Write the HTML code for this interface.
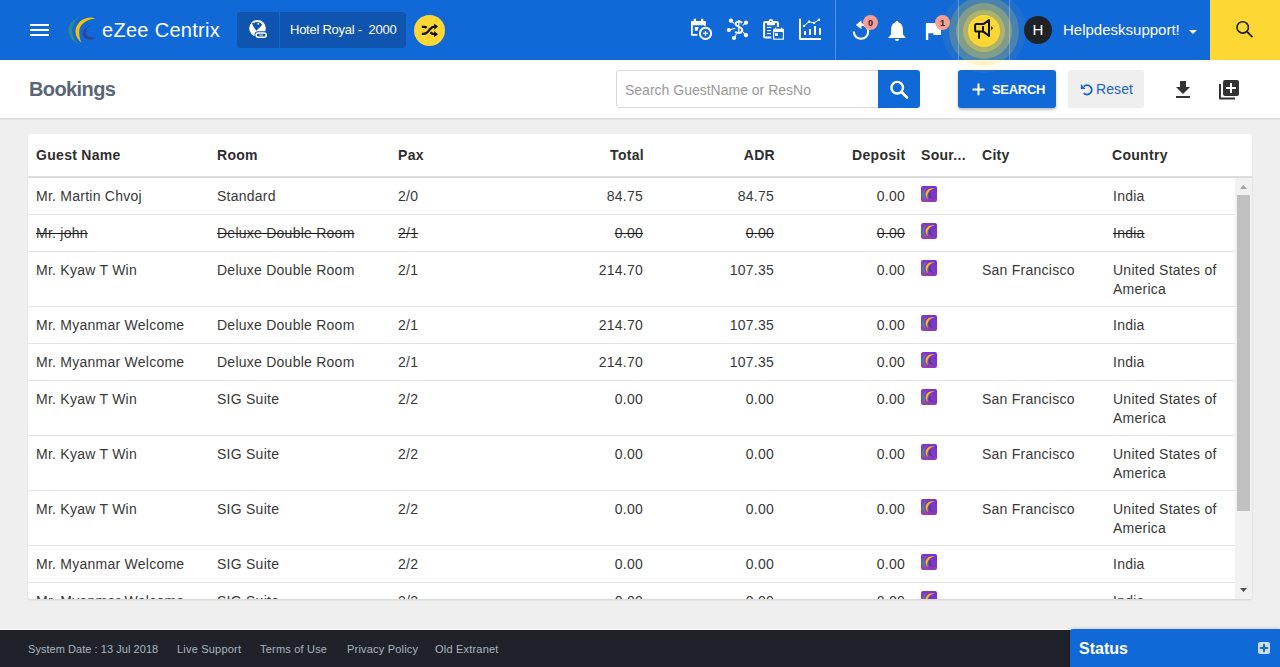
<!DOCTYPE html>
<html><head><meta charset="utf-8"><title>Bookings</title>
<style>
*{margin:0;padding:0;box-sizing:border-box}
html,body{width:1280px;height:667px;overflow:hidden}
body{position:relative;background:#efefef;font-family:"Liberation Sans",sans-serif;color:#333}
.a{position:absolute}
svg{position:absolute;overflow:visible}
#nav{z-index:2;left:0;top:0;width:1280px;height:60px;background:#1169d8}
.sep{top:0;width:1px;height:60px;background:rgba(255,255,255,.28)}
.badge{width:15px;height:15px;border-radius:50%;background:#f99d96;color:#2a1a1a;font-size:9px;font-weight:bold;line-height:16.5px;text-align:center}
#sub{left:0;top:60px;width:1280px;height:59px;background:#fff;border-bottom:1px solid #dcdcdc;box-shadow:0 1px 1px rgba(0,0,0,.04)}
#card{left:28px;top:134px;width:1224px;height:465px;background:#fff;border-radius:3px;box-shadow:0 1px 2px rgba(0,0,0,.12);overflow:hidden}
.th{position:absolute;top:0;height:42px;font-weight:bold;font-size:14px;color:#2e2e2e;line-height:18px;padding-top:12px;letter-spacing:0.3px}
.row{position:absolute;left:0;width:1207px;border-bottom:1px solid #e3e3e3}
.c{position:absolute;top:0;font-size:14px;line-height:19px;padding-top:9.4px;color:#383838;letter-spacing:0.25px}
.r{text-align:right}
.s{text-decoration:line-through;text-decoration-color:#1a1a1a}
#foot{left:0;top:629px;width:1280px;height:38px;background:#1f2329;border-top:1px solid #fafafa}
.fl{top:13px;font-size:11px;line-height:13px;color:#a9b5c1;letter-spacing:0.2px}
</style></head><body>

<div id="nav" class="a">
  <!-- hamburger -->
  <div class="a" style="left:30px;top:24px;width:19px;height:2px;background:#fff"></div>
  <div class="a" style="left:30px;top:29px;width:19px;height:2px;background:#fff"></div>
  <div class="a" style="left:30px;top:34px;width:19px;height:2px;background:#fff"></div>
  <!-- logo -->
  <svg width="1" height="1" style="left:0;top:0">
    <path fill="#2f8a8c" d="M80.2,16.3 C73,19.5 68.3,25 68.3,30.3 C68.3,36 72,41 78.6,43.8 C74.5,40 72.1,35.5 72.1,30.3 C72.1,25 75,20 80.2,16.3 Z"/>
    <path fill="#f6c300" d="M95.3,18.5 C88,15.5 78.5,20 76,28 C74.5,33 76.5,38.5 81.3,42.5 C79.5,38.5 78.8,34 79.3,30 C80.5,23.5 87,19.5 95.3,18.5 Z"/>
    <path fill="#2b479e" d="M90.4,24.7 C85,27.5 82.6,31 82.6,34 C82.8,37.8 86,39.5 89.5,39.5 C92,39.5 94.5,38.5 96.4,37.4 C92,38 87.5,37 86.3,34 C85.5,31 87,27.5 90.4,24.7 Z"/>
  </svg>
  <div class="a" style="left:102px;top:18px;font-size:20px;line-height:24px;color:#fff;letter-spacing:0.3px">eZee Centrix</div>
  <!-- hotel box -->
  <div class="a" style="left:237px;top:12px;width:42px;height:36px;background:#0f55b0;border-radius:3px 0 0 3px"></div>
  <div class="a" style="left:280px;top:12px;width:126px;height:36px;background:#0f55b0;border-radius:0 3px 3px 0"></div>
  <svg width="1" height="1" style="left:0;top:0">
    <circle cx="257.5" cy="28.3" r="8.3" fill="#fff"/>
    <path fill="#0f55b0" d="M252,23.4 C253.5,22.5 256,22 258,22 C259.6,22.2 261,23 262,24.4 C261.4,26 260,27.3 258.8,28.2 C258,29 257.4,30 256.6,30.7 C255,29 253,26 252,23.4 Z"/>
    <circle cx="258.3" cy="23.7" r="0.95" fill="#fff"/>
    <rect x="254.5" y="31.3" width="13.4" height="7.6" rx="3.8" fill="#0f55b0"/>
    <rect x="256.1" y="32.9" width="10.2" height="4.4" rx="2.2" fill="none" stroke="#fff" stroke-width="1.5"/>
    <rect x="259.4" y="34.5" width="3.6" height="1.2" fill="#fff" opacity=".75"/>
  </svg>
  <div class="a" style="left:290px;top:21.5px;font-size:13px;line-height:16px;color:#fff;white-space:pre;letter-spacing:-0.25px">Hotel Royal -  2000</div>
  <!-- shuffle -->
  <div class="a" style="left:414px;top:15px;width:31px;height:31px;border-radius:50%;background:#fdd835"></div>
  <svg width="1" height="1" style="left:0;top:0">
    <path d="M421.8,26.8 H424.3 C425.4,26.8 426,27.2 426.7,27.9 M421.8,33.8 H423.8 C426.8,33.8 427.9,31.8 429.7,29.5 C431.5,27.2 432.6,26.6 435,26.6 M430.4,32.3 C431.7,33.5 432.6,34.2 435,34.2" fill="none" stroke="#111" stroke-width="2.3"/>
    <path d="M434.2,23.5 L438,26.6 L434.2,29.7 Z M434.2,31.1 L438,34.2 L434.2,37.3 Z" fill="#111"/>
  </svg>

  <!-- icon group 1 -->
  <svg width="1" height="1" style="left:0;top:0" fill="#fff">
    <!-- calendar plus -->
    <rect x="693.7" y="18.8" width="2.3" height="3" />
    <rect x="701" y="18.8" width="2.3" height="3" />
    <path d="M692,21 h13 a1,1 0 0 1 1,1 v3.8 h-2 v-0.6 h-11.2 v8.8 h4.6 v1.8 h-5.4 a1,1 0 0 1 -1,-1 v-12.8 a1,1 0 0 1 1,-1 z"/>
    <path d="M694.8,27.1 h3.8 l-1,3.7 h-2.8 z"/>
    <circle cx="705.5" cy="33.4" r="5.6" fill="none" stroke="#fff" stroke-width="2"/>
    <path d="M705.5,30.9 v5 M703,33.4 h5" stroke="#fff" stroke-width="1.3"/>
    <!-- network dollar -->
    <g stroke="#fff" stroke-width="1.1" fill="none">
      <path d="M731,20.7 L734,23.4 M746,22.7 L742.6,25.4 M728.8,30 L735.2,28.3 M734,38 L736.4,34 M746,35.2 L743,32.2"/>
      <path d="M742.2,22.8 C740.8,21.2 735.8,20.8 735.5,23.9 C735.2,26.8 742.3,26.3 742.3,29.9 C742.3,33.4 736.8,33.6 735.2,31.7" stroke-width="1.9"/>
      <path d="M738.8,19.9 V34" stroke-width="1.3"/>
    </g>
    <circle cx="730.9" cy="20.7" r="2.1"/><circle cx="746" cy="22.7" r="2.1"/><circle cx="728.8" cy="30" r="2.1"/>
    <circle cx="734" cy="38" r="2.1"/><circle cx="746" cy="35.2" r="2.1"/>
    <!-- clipboard calendar -->
    <rect x="764.1" y="21.9" width="13.8" height="15.7" rx="1.3" fill="none" stroke="#fff" stroke-width="2"/>
    <rect x="767" y="21.2" width="8" height="4" rx="0.8"/>
    <circle cx="770.9" cy="21.2" r="2.2"/><circle cx="770.9" cy="21.6" r="0.8" fill="#1169d8"/>
    <rect x="767" y="26.9" width="6" height="1.1"/><rect x="767" y="30" width="4" height="1.1"/><rect x="767" y="33" width="4" height="1.1"/>
    <rect x="771.3" y="27" width="14" height="14" fill="#1169d8"/>
    <rect x="773" y="28.8" width="11" height="11" rx="0.8"/>
    <rect x="774.2" y="32" width="8.6" height="6.6" fill="#1169d8"/>
    <rect x="775" y="33.2" width="3" height="2.7"/>
    <rect x="775" y="27.7" width="1.2" height="2"/><rect x="781" y="27.7" width="1.2" height="2"/>
    <!-- chart -->
    <path d="M799,18.7 h2 v19.3 h20 v2 h-20.5 a1.5,1.5 0 0 1 -1.5,-1.5 z"/>
    <rect x="804" y="31" width="2" height="4"/><rect x="809" y="29" width="2" height="6"/><rect x="814" y="26" width="2" height="9"/><rect x="819" y="28" width="2" height="7"/>
    <path d="M804,25.9 L809,21.8 L814,22.9 L819,19.7" stroke="#fff" stroke-width="1" fill="none"/>
    <circle cx="804" cy="25.9" r="1.2"/><circle cx="809" cy="21.8" r="1.2"/><circle cx="814" cy="22.9" r="1.2"/><circle cx="819" cy="19.7" r="1.2"/>
  </svg>
  <div class="a sep" style="left:835px"></div>
  <!-- refresh -->
  <svg width="1" height="1" style="left:0;top:0">
    <path d="M861,24.4 A7.2,7.2 0 1 1 853.8,31.6" fill="none" stroke="#fff" stroke-width="2.1"/>
    <path d="M861.5,20.3 L855.8,24.9 L861.5,29.2 Z" fill="#fff"/>
    <!-- bell -->
    <path fill="#fff" d="M897,20.9 a1.4,1.4 0 0 1 1.4,1.4 C901.6,23.3 902.9,26 902.9,29.5 v4.8 l3,3.8 h-17.8 l3,-3.8 v-4.8 C891.1,26 892.4,23.3 895.6,22.3 a1.4,1.4 0 0 1 1.4,-1.4 z"/>
    <path fill="#fff" d="M894.8,38.9 h4.4 a2.2,2.1 0 0 1 -4.4,0 z"/>
    <!-- flag -->
    <rect x="925.9" y="23" width="2.4" height="17" fill="#fff"/>
    <path fill="#fff" d="M927.5,23 h13.5 v11.9 h-7.6 v-1.7 h-5.9 z"/>
  </svg>
  <div class="a badge" style="left:863px;top:15px">0</div>
  <div class="a badge" style="left:935px;top:15px">1</div>
  <!-- megaphone halo -->
  <div class="a" style="left:942px;top:-11px;width:84px;height:84px;border-radius:50%;background:rgba(253,216,53,.06)"></div>
  <div class="a" style="left:949px;top:-4px;width:70px;height:70px;border-radius:50%;background:rgba(253,216,53,.2)"></div>
  <div class="a" style="left:956px;top:3px;width:56px;height:56px;border-radius:50%;background:rgba(253,216,53,.3)"></div>
  <div class="a" style="left:963px;top:10px;width:42px;height:42px;border-radius:50%;background:rgba(253,216,53,.38)"></div>
  <div class="a sep" style="left:958px"></div>
  <div class="a sep" style="left:1009px"></div>
  <div class="a" style="left:968px;top:15px;width:32px;height:32px;border-radius:50%;background:#fdd835"></div>
  <svg width="1" height="1" style="left:0;top:0">
    <path d="M983.4,24.1 L989,20.1 V35.9 L983.4,31.6 H976.4 A1.3,1.3 0 0 1 975.1,30.3 V25.4 A1.3,1.3 0 0 1 976.4,24.1 Z" fill="none" stroke="#111" stroke-width="2" stroke-linejoin="round"/>
    <path d="M983,26.1 V32.4 M979,32 V38.8" stroke="#111" stroke-width="2"/>
    <path d="M991.2,26 L993,28.2 L991.2,30.5 Z" fill="#111"/>
  </svg>
  <!-- avatar -->
  <div class="a" style="left:1024px;top:16px;width:28px;height:28px;border-radius:50%;background:#1f2329;color:#fff;font-size:15px;line-height:28px;text-align:center">H</div>
  <div class="a" style="left:1063px;top:21px;font-size:15px;line-height:18px;color:#fff">Helpdesksupport!</div>
  <svg width="1" height="1" style="left:0;top:0"><path d="M1189,30 h8 l-4,4 z" fill="#fff"/></svg>
  <!-- search yellow -->
  <div class="a" style="left:1210px;top:0;width:70px;height:60px;background:#fdd835"></div>
  <svg width="1" height="1" style="left:0;top:0">
    <circle cx="1242.7" cy="27.4" r="5.7" fill="none" stroke="#222" stroke-width="1.6"/>
    <path d="M1246.8,31.5 L1252.5,37.2" stroke="#222" stroke-width="1.8"/>
  </svg>
</div>

<div id="sub" class="a">
  <div class="a" style="left:29px;top:18px;font-size:20px;line-height:23px;font-weight:bold;color:#5a6577;letter-spacing:-0.6px">Bookings</div>
  <div class="a" style="left:616px;top:10px;width:264px;height:38px;border:1px solid #d3dae3;border-radius:3px 0 0 3px;background:#fff"></div>
  <div class="a" style="left:625px;top:22px;font-size:14px;line-height:17px;color:#999">Search GuestName or ResNo</div>
  <div class="a" style="left:878px;top:10px;width:42px;height:38px;background:#1169d8;border-radius:0 3px 3px 0"></div>
  <svg width="1" height="1" style="left:0;top:-60px">
    <circle cx="897.2" cy="87.7" r="5.8" fill="none" stroke="#fff" stroke-width="2.4"/>
    <path d="M901.5,92 L907,97.5" stroke="#fff" stroke-width="2.6" stroke-linecap="round"/>
  </svg>
  <div class="a" style="left:958px;top:10px;width:98px;height:38px;background:#1169d8;border-radius:3px;box-shadow:0 2px 3px rgba(0,0,0,.25)"></div>
  <svg width="1" height="1" style="left:0;top:-60px">
    <path d="M978.5,83.5 v11.7 M972.5,89.4 h12" stroke="#fff" stroke-width="2"/>
  </svg>
  <div class="a" style="left:992px;top:22px;font-size:13px;line-height:16px;font-weight:bold;color:#fff;letter-spacing:-0.3px">SEARCH</div>
  <div class="a" style="left:1068px;top:10px;width:76px;height:38px;background:#efefef;border-radius:3px"></div>
  <svg width="1" height="1" style="left:0;top:-60px">
    <path d="M1083.7,86.6 A4.7,4.7 0 1 1 1083.7,93.2" fill="none" stroke="#1a62d0" stroke-width="1.8"/>
    <path d="M1080.9,83.9 V89 H1085.6 Z" fill="#1a62d0"/>
  </svg>
  <div class="a" style="left:1096px;top:21px;font-size:14px;line-height:17px;color:#1a62d0;letter-spacing:0.1px">Reset</div>
  <!-- download -->
  <svg width="1" height="1" style="left:0;top:-60px" fill="#333">
    <path d="M1180,81 h6 v6 h4 l-7,7 l-7,-7 h4 z"/>
    <rect x="1176" y="96" width="14" height="2"/>
    <!-- library add -->
    <rect x="1223" y="80" width="16" height="16" rx="2"/>
    <path d="M1231,83 v10 M1226,88 h10" stroke="#fff" stroke-width="2"/>
    <path d="M1219,84 h2 v13.6 h14 v2 h-15 a1,1 0 0 1 -1,-1 z"/>
  </svg>
</div>

<div id="card" class="a">
  <div class="th" style="left:8px">Guest Name</div>
  <div class="th" style="left:189px">Room</div>
  <div class="th" style="left:370px">Pax</div>
  <div class="th r" style="left:486px;width:130px">Total</div>
  <div class="th r" style="left:617px;width:130px">ADR</div>
  <div class="th r" style="left:747.5px;width:130px">Deposit</div>
  <div class="th" style="left:893px">Sour...</div>
  <div class="th" style="left:954px">City</div>
  <div class="th" style="left:1084px">Country</div>
  <div class="a" style="left:0;top:42px;width:1224px;height:2px;background:#dcdcdc"></div>
  <div id="rows" class="a" style="left:0;top:44px;width:1224px;height:421px;overflow:hidden">
<div class="row" style="top:0px;height:37px"><div class="c" style="left:8px">Mr. Martin Chvoj</div><div class="c" style="left:189px">Standard</div><div class="c" style="left:370px">2/0</div><div class="c r" style="left:485px;width:130px">84.75</div><div class="c r" style="left:616px;width:130px">84.75</div><div class="c r" style="left:747px;width:130px">0.00</div><svg width="16" height="16" viewBox="0 0 16 16" style="position:absolute;left:893px;top:8px"><defs><linearGradient id="g0" x1="1" y1="0" x2="0" y2="1"><stop offset="0" stop-color="#6d2fe0"/><stop offset="1" stop-color="#a5409f"/></linearGradient></defs><rect width="16" height="16" rx="2" fill="url(#g0)"/><path fill="#2d9a95" d="M6.2,1.4 C3,2.8 1.3,5.5 1.3,8 C1.3,11 3,13.4 6,14.7 C4.3,12.8 2.9,10.5 2.9,8 C2.9,5.5 4.2,3.2 6.2,1.4 Z"/><path fill="#f6c300" d="M13.8,2.5 C10,1.4 6.2,3.2 5,6.2 C4.1,8.5 4.7,11 6.9,13.2 C6.2,11 6.2,9 6.8,7.4 C8,4.5 10.5,3 13.8,2.5 Z"/><path fill="#2b479e" d="M10.8,5.5 C8.5,6.7 7.6,8.3 7.8,9.8 C8.2,11.9 10.8,12.9 13.6,12.2 C11.5,12 10.1,11.2 9.7,9.8 C9.3,8.5 9.7,6.9 10.8,5.5 Z"/></svg><div class="c" style="left:1085px;width:120px">India</div></div>
<div class="row" style="top:37px;height:37px"><div class="c s" style="left:8px">Mr. john</div><div class="c s" style="left:189px">Deluxe Double Room</div><div class="c s" style="left:370px">2/1</div><div class="c r s" style="left:485px;width:130px">0.00</div><div class="c r s" style="left:616px;width:130px">0.00</div><div class="c r s" style="left:747px;width:130px">0.00</div><svg width="16" height="16" viewBox="0 0 16 16" style="position:absolute;left:893px;top:8px"><defs><linearGradient id="g1" x1="1" y1="0" x2="0" y2="1"><stop offset="0" stop-color="#6d2fe0"/><stop offset="1" stop-color="#a5409f"/></linearGradient></defs><rect width="16" height="16" rx="2" fill="url(#g1)"/><path fill="#2d9a95" d="M6.2,1.4 C3,2.8 1.3,5.5 1.3,8 C1.3,11 3,13.4 6,14.7 C4.3,12.8 2.9,10.5 2.9,8 C2.9,5.5 4.2,3.2 6.2,1.4 Z"/><path fill="#f6c300" d="M13.8,2.5 C10,1.4 6.2,3.2 5,6.2 C4.1,8.5 4.7,11 6.9,13.2 C6.2,11 6.2,9 6.8,7.4 C8,4.5 10.5,3 13.8,2.5 Z"/><path fill="#2b479e" d="M10.8,5.5 C8.5,6.7 7.6,8.3 7.8,9.8 C8.2,11.9 10.8,12.9 13.6,12.2 C11.5,12 10.1,11.2 9.7,9.8 C9.3,8.5 9.7,6.9 10.8,5.5 Z"/></svg><div class="c s" style="left:1085px;width:120px">India</div></div>
<div class="row" style="top:74px;height:55px"><div class="c" style="left:8px">Mr. Kyaw T Win</div><div class="c" style="left:189px">Deluxe Double Room</div><div class="c" style="left:370px">2/1</div><div class="c r" style="left:485px;width:130px">214.70</div><div class="c r" style="left:616px;width:130px">107.35</div><div class="c r" style="left:747px;width:130px">0.00</div><svg width="16" height="16" viewBox="0 0 16 16" style="position:absolute;left:893px;top:8px"><defs><linearGradient id="g2" x1="1" y1="0" x2="0" y2="1"><stop offset="0" stop-color="#6d2fe0"/><stop offset="1" stop-color="#a5409f"/></linearGradient></defs><rect width="16" height="16" rx="2" fill="url(#g2)"/><path fill="#2d9a95" d="M6.2,1.4 C3,2.8 1.3,5.5 1.3,8 C1.3,11 3,13.4 6,14.7 C4.3,12.8 2.9,10.5 2.9,8 C2.9,5.5 4.2,3.2 6.2,1.4 Z"/><path fill="#f6c300" d="M13.8,2.5 C10,1.4 6.2,3.2 5,6.2 C4.1,8.5 4.7,11 6.9,13.2 C6.2,11 6.2,9 6.8,7.4 C8,4.5 10.5,3 13.8,2.5 Z"/><path fill="#2b479e" d="M10.8,5.5 C8.5,6.7 7.6,8.3 7.8,9.8 C8.2,11.9 10.8,12.9 13.6,12.2 C11.5,12 10.1,11.2 9.7,9.8 C9.3,8.5 9.7,6.9 10.8,5.5 Z"/></svg><div class="c" style="left:954px">San Francisco</div><div class="c" style="left:1085px;width:120px">United States of America</div></div>
<div class="row" style="top:129px;height:37px"><div class="c" style="left:8px">Mr. Myanmar Welcome</div><div class="c" style="left:189px">Deluxe Double Room</div><div class="c" style="left:370px">2/1</div><div class="c r" style="left:485px;width:130px">214.70</div><div class="c r" style="left:616px;width:130px">107.35</div><div class="c r" style="left:747px;width:130px">0.00</div><svg width="16" height="16" viewBox="0 0 16 16" style="position:absolute;left:893px;top:8px"><defs><linearGradient id="g3" x1="1" y1="0" x2="0" y2="1"><stop offset="0" stop-color="#6d2fe0"/><stop offset="1" stop-color="#a5409f"/></linearGradient></defs><rect width="16" height="16" rx="2" fill="url(#g3)"/><path fill="#2d9a95" d="M6.2,1.4 C3,2.8 1.3,5.5 1.3,8 C1.3,11 3,13.4 6,14.7 C4.3,12.8 2.9,10.5 2.9,8 C2.9,5.5 4.2,3.2 6.2,1.4 Z"/><path fill="#f6c300" d="M13.8,2.5 C10,1.4 6.2,3.2 5,6.2 C4.1,8.5 4.7,11 6.9,13.2 C6.2,11 6.2,9 6.8,7.4 C8,4.5 10.5,3 13.8,2.5 Z"/><path fill="#2b479e" d="M10.8,5.5 C8.5,6.7 7.6,8.3 7.8,9.8 C8.2,11.9 10.8,12.9 13.6,12.2 C11.5,12 10.1,11.2 9.7,9.8 C9.3,8.5 9.7,6.9 10.8,5.5 Z"/></svg><div class="c" style="left:1085px;width:120px">India</div></div>
<div class="row" style="top:166px;height:37px"><div class="c" style="left:8px">Mr. Myanmar Welcome</div><div class="c" style="left:189px">Deluxe Double Room</div><div class="c" style="left:370px">2/1</div><div class="c r" style="left:485px;width:130px">214.70</div><div class="c r" style="left:616px;width:130px">107.35</div><div class="c r" style="left:747px;width:130px">0.00</div><svg width="16" height="16" viewBox="0 0 16 16" style="position:absolute;left:893px;top:8px"><defs><linearGradient id="g4" x1="1" y1="0" x2="0" y2="1"><stop offset="0" stop-color="#6d2fe0"/><stop offset="1" stop-color="#a5409f"/></linearGradient></defs><rect width="16" height="16" rx="2" fill="url(#g4)"/><path fill="#2d9a95" d="M6.2,1.4 C3,2.8 1.3,5.5 1.3,8 C1.3,11 3,13.4 6,14.7 C4.3,12.8 2.9,10.5 2.9,8 C2.9,5.5 4.2,3.2 6.2,1.4 Z"/><path fill="#f6c300" d="M13.8,2.5 C10,1.4 6.2,3.2 5,6.2 C4.1,8.5 4.7,11 6.9,13.2 C6.2,11 6.2,9 6.8,7.4 C8,4.5 10.5,3 13.8,2.5 Z"/><path fill="#2b479e" d="M10.8,5.5 C8.5,6.7 7.6,8.3 7.8,9.8 C8.2,11.9 10.8,12.9 13.6,12.2 C11.5,12 10.1,11.2 9.7,9.8 C9.3,8.5 9.7,6.9 10.8,5.5 Z"/></svg><div class="c" style="left:1085px;width:120px">India</div></div>
<div class="row" style="top:203px;height:55px"><div class="c" style="left:8px">Mr. Kyaw T Win</div><div class="c" style="left:189px">SIG Suite</div><div class="c" style="left:370px">2/2</div><div class="c r" style="left:485px;width:130px">0.00</div><div class="c r" style="left:616px;width:130px">0.00</div><div class="c r" style="left:747px;width:130px">0.00</div><svg width="16" height="16" viewBox="0 0 16 16" style="position:absolute;left:893px;top:8px"><defs><linearGradient id="g5" x1="1" y1="0" x2="0" y2="1"><stop offset="0" stop-color="#6d2fe0"/><stop offset="1" stop-color="#a5409f"/></linearGradient></defs><rect width="16" height="16" rx="2" fill="url(#g5)"/><path fill="#2d9a95" d="M6.2,1.4 C3,2.8 1.3,5.5 1.3,8 C1.3,11 3,13.4 6,14.7 C4.3,12.8 2.9,10.5 2.9,8 C2.9,5.5 4.2,3.2 6.2,1.4 Z"/><path fill="#f6c300" d="M13.8,2.5 C10,1.4 6.2,3.2 5,6.2 C4.1,8.5 4.7,11 6.9,13.2 C6.2,11 6.2,9 6.8,7.4 C8,4.5 10.5,3 13.8,2.5 Z"/><path fill="#2b479e" d="M10.8,5.5 C8.5,6.7 7.6,8.3 7.8,9.8 C8.2,11.9 10.8,12.9 13.6,12.2 C11.5,12 10.1,11.2 9.7,9.8 C9.3,8.5 9.7,6.9 10.8,5.5 Z"/></svg><div class="c" style="left:954px">San Francisco</div><div class="c" style="left:1085px;width:120px">United States of America</div></div>
<div class="row" style="top:258px;height:55px"><div class="c" style="left:8px">Mr. Kyaw T Win</div><div class="c" style="left:189px">SIG Suite</div><div class="c" style="left:370px">2/2</div><div class="c r" style="left:485px;width:130px">0.00</div><div class="c r" style="left:616px;width:130px">0.00</div><div class="c r" style="left:747px;width:130px">0.00</div><svg width="16" height="16" viewBox="0 0 16 16" style="position:absolute;left:893px;top:8px"><defs><linearGradient id="g6" x1="1" y1="0" x2="0" y2="1"><stop offset="0" stop-color="#6d2fe0"/><stop offset="1" stop-color="#a5409f"/></linearGradient></defs><rect width="16" height="16" rx="2" fill="url(#g6)"/><path fill="#2d9a95" d="M6.2,1.4 C3,2.8 1.3,5.5 1.3,8 C1.3,11 3,13.4 6,14.7 C4.3,12.8 2.9,10.5 2.9,8 C2.9,5.5 4.2,3.2 6.2,1.4 Z"/><path fill="#f6c300" d="M13.8,2.5 C10,1.4 6.2,3.2 5,6.2 C4.1,8.5 4.7,11 6.9,13.2 C6.2,11 6.2,9 6.8,7.4 C8,4.5 10.5,3 13.8,2.5 Z"/><path fill="#2b479e" d="M10.8,5.5 C8.5,6.7 7.6,8.3 7.8,9.8 C8.2,11.9 10.8,12.9 13.6,12.2 C11.5,12 10.1,11.2 9.7,9.8 C9.3,8.5 9.7,6.9 10.8,5.5 Z"/></svg><div class="c" style="left:954px">San Francisco</div><div class="c" style="left:1085px;width:120px">United States of America</div></div>
<div class="row" style="top:313px;height:55px"><div class="c" style="left:8px">Mr. Kyaw T Win</div><div class="c" style="left:189px">SIG Suite</div><div class="c" style="left:370px">2/2</div><div class="c r" style="left:485px;width:130px">0.00</div><div class="c r" style="left:616px;width:130px">0.00</div><div class="c r" style="left:747px;width:130px">0.00</div><svg width="16" height="16" viewBox="0 0 16 16" style="position:absolute;left:893px;top:8px"><defs><linearGradient id="g7" x1="1" y1="0" x2="0" y2="1"><stop offset="0" stop-color="#6d2fe0"/><stop offset="1" stop-color="#a5409f"/></linearGradient></defs><rect width="16" height="16" rx="2" fill="url(#g7)"/><path fill="#2d9a95" d="M6.2,1.4 C3,2.8 1.3,5.5 1.3,8 C1.3,11 3,13.4 6,14.7 C4.3,12.8 2.9,10.5 2.9,8 C2.9,5.5 4.2,3.2 6.2,1.4 Z"/><path fill="#f6c300" d="M13.8,2.5 C10,1.4 6.2,3.2 5,6.2 C4.1,8.5 4.7,11 6.9,13.2 C6.2,11 6.2,9 6.8,7.4 C8,4.5 10.5,3 13.8,2.5 Z"/><path fill="#2b479e" d="M10.8,5.5 C8.5,6.7 7.6,8.3 7.8,9.8 C8.2,11.9 10.8,12.9 13.6,12.2 C11.5,12 10.1,11.2 9.7,9.8 C9.3,8.5 9.7,6.9 10.8,5.5 Z"/></svg><div class="c" style="left:954px">San Francisco</div><div class="c" style="left:1085px;width:120px">United States of America</div></div>
<div class="row" style="top:368px;height:37px"><div class="c" style="left:8px">Mr. Myanmar Welcome</div><div class="c" style="left:189px">SIG Suite</div><div class="c" style="left:370px">2/2</div><div class="c r" style="left:485px;width:130px">0.00</div><div class="c r" style="left:616px;width:130px">0.00</div><div class="c r" style="left:747px;width:130px">0.00</div><svg width="16" height="16" viewBox="0 0 16 16" style="position:absolute;left:893px;top:8px"><defs><linearGradient id="g8" x1="1" y1="0" x2="0" y2="1"><stop offset="0" stop-color="#6d2fe0"/><stop offset="1" stop-color="#a5409f"/></linearGradient></defs><rect width="16" height="16" rx="2" fill="url(#g8)"/><path fill="#2d9a95" d="M6.2,1.4 C3,2.8 1.3,5.5 1.3,8 C1.3,11 3,13.4 6,14.7 C4.3,12.8 2.9,10.5 2.9,8 C2.9,5.5 4.2,3.2 6.2,1.4 Z"/><path fill="#f6c300" d="M13.8,2.5 C10,1.4 6.2,3.2 5,6.2 C4.1,8.5 4.7,11 6.9,13.2 C6.2,11 6.2,9 6.8,7.4 C8,4.5 10.5,3 13.8,2.5 Z"/><path fill="#2b479e" d="M10.8,5.5 C8.5,6.7 7.6,8.3 7.8,9.8 C8.2,11.9 10.8,12.9 13.6,12.2 C11.5,12 10.1,11.2 9.7,9.8 C9.3,8.5 9.7,6.9 10.8,5.5 Z"/></svg><div class="c" style="left:1085px;width:120px">India</div></div>
<div class="row" style="top:405px;height:37px"><div class="c" style="left:8px">Mr. Myanmar Welcome</div><div class="c" style="left:189px">SIG Suite</div><div class="c" style="left:370px">2/2</div><div class="c r" style="left:485px;width:130px">0.00</div><div class="c r" style="left:616px;width:130px">0.00</div><div class="c r" style="left:747px;width:130px">0.00</div><svg width="16" height="16" viewBox="0 0 16 16" style="position:absolute;left:893px;top:8px"><defs><linearGradient id="g9" x1="1" y1="0" x2="0" y2="1"><stop offset="0" stop-color="#6d2fe0"/><stop offset="1" stop-color="#a5409f"/></linearGradient></defs><rect width="16" height="16" rx="2" fill="url(#g9)"/><path fill="#2d9a95" d="M6.2,1.4 C3,2.8 1.3,5.5 1.3,8 C1.3,11 3,13.4 6,14.7 C4.3,12.8 2.9,10.5 2.9,8 C2.9,5.5 4.2,3.2 6.2,1.4 Z"/><path fill="#f6c300" d="M13.8,2.5 C10,1.4 6.2,3.2 5,6.2 C4.1,8.5 4.7,11 6.9,13.2 C6.2,11 6.2,9 6.8,7.4 C8,4.5 10.5,3 13.8,2.5 Z"/><path fill="#2b479e" d="M10.8,5.5 C8.5,6.7 7.6,8.3 7.8,9.8 C8.2,11.9 10.8,12.9 13.6,12.2 C11.5,12 10.1,11.2 9.7,9.8 C9.3,8.5 9.7,6.9 10.8,5.5 Z"/></svg><div class="c" style="left:1085px;width:120px">India</div></div>
  </div>
  <!-- scrollbar -->
  <div class="a" style="left:1207px;top:44px;width:17px;height:421px;background:#f1f1f1"></div>
  <div class="a" style="left:1209px;top:61px;width:13px;height:316px;background:#c1c1c1"></div>
  <svg width="1" height="1" style="left:0;top:0"><path d="M1212,55 h7 l-3.5,-4 z" fill="#a3a3a3"/><path d="M1212,454 h7 l-3.5,4 z" fill="#505050"/></svg>
</div>

<div id="foot" class="a">
  <div class="a fl" style="left:28px;letter-spacing:0.05px">System Date : 13 Jul 2018</div>
  <div class="a fl" style="left:177px">Live Support</div>
  <div class="a fl" style="left:260px">Terms of Use</div>
  <div class="a fl" style="left:347px">Privacy Policy</div>
  <div class="a fl" style="left:435px">Old Extranet</div>
</div>
<div class="a" style="left:1070px;top:629px;width:210px;height:38px;background:#1169d8;border-radius:3px 0 0 0;box-shadow:0 0 4px rgba(0,0,0,.2)"></div>
<div class="a" style="left:1079px;top:639px;font-size:16px;line-height:19px;font-weight:bold;color:#fff">Status</div>
<div class="a" style="left:1258px;top:642px;width:12px;height:12px;background:#c9dcf6;border-radius:2px"></div>
<svg width="1" height="1" style="left:0;top:0"><path d="M1264,644 v8 M1260,648 h8" stroke="#1169d8" stroke-width="2"/></svg>

</body></html>
